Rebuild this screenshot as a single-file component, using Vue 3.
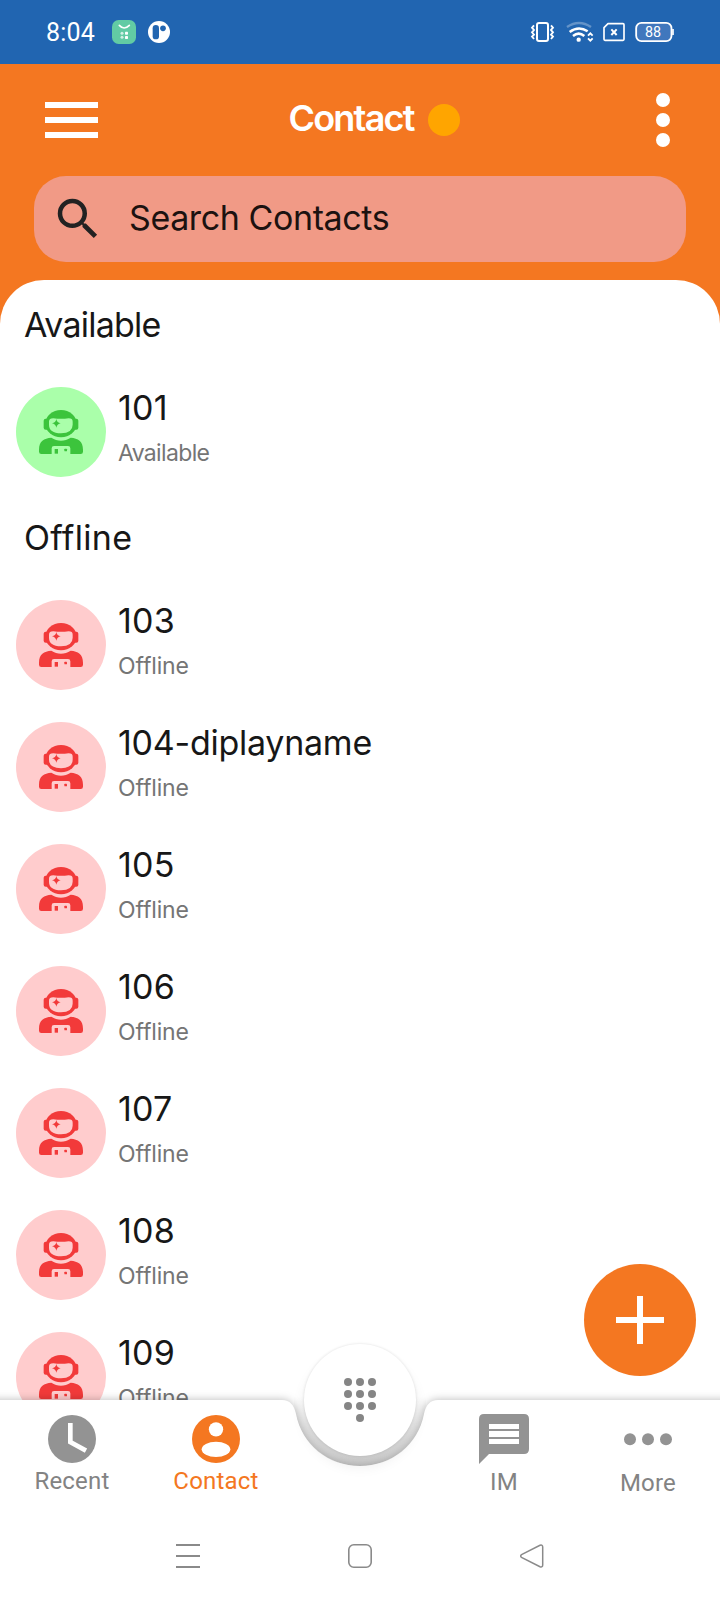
<script setup>
import { ref } from 'vue';

const search = ref('');
const activeTab = ref('contact');

const groups = ref([
    { title: 'Available', status: 'online', contacts: ['101'] },
    {
        title: 'Offline',
        status: 'offline',
        contacts: ['103', '104-diplayname', '105', '106', '107', '108', '109']
    }
]);

const statusLabel = { online: 'Available', offline: 'Offline' };

const selectTab = (name) => {
    activeTab.value = name;
}
</script>

<template>
    <div class="phone">
        <!-- Status bar -->
        <div class="status-bar">
            <span class="clock">8:04</span>
            <svg class="app-badge" width="24" height="24" viewBox="0 0 72 72">
                <rect width="72" height="72" rx="20" fill="#62cba4" />
                <path d="M22 16 Q36 32 52 16" fill="none" stroke="#fff" stroke-width="5" stroke-linecap="round" />
                <g fill="#fff">
                    <circle cx="30" cy="40" r="4.5" opacity=".7" />
                    <rect x="39" y="35" width="9" height="9" rx="2" />
                    <circle cx="30" cy="52" r="4.5" opacity=".7" />
                    <rect x="39" y="48" width="9" height="9" rx="2" />
                </g>
            </svg>
            <svg width="22" height="22" viewBox="0 0 66 66">
                <circle cx="33" cy="33" r="33" fill="#fff" />
                <rect x="14" y="12" width="19" height="43" rx="9.5" fill="#2165b1" />
                <circle cx="45" cy="22" r="8.5" fill="#2165b1" />
            </svg>
            <div class="status-right">
                <svg width="25" height="24" viewBox="150 60 75 72" fill="none" stroke="#fff" stroke-width="6">
                    <rect x="171" y="69" width="33" height="54" rx="6" />
                    <path d="M162 76 L156 83 L162 90 L156 97 L162 104 L156 110 L162 117" stroke-width="5.5" />
                    <path d="M213 76 L219 83 L213 90 L219 97 L213 104 L219 110 L213 117" stroke-width="5.5" />
                </svg>
                <svg class="wifi" width="28" height="24" viewBox="258 60 84 72" fill="none" stroke="#fff" stroke-width="7.5">
                    <path d="M261 81 Q297 57 333 81" opacity=".3" />
                    <path d="M269 96 Q296 76 323 94" />
                    <path d="M279 108 Q296 94 313 108" />
                    <circle cx="296" cy="119" r="6.5" fill="#fff" stroke="none" />
                    <path d="M324 107 L331 100 L338 107 M324 115 L331 122 L338 115" stroke-width="5.5" />
                </svg>
                <svg width="24" height="24" viewBox="366 60 72 72" fill="none" stroke="#fff" stroke-width="5">
                    <path d="M384 71 H429 Q432 71 432 74 V118 Q432 121 429 121 H375 Q372 121 372 118 V83 Z" stroke-linejoin="round" />
                    <path d="M394 88 L410 105 M410 88 L394 105" stroke-width="6" />
                </svg>
                <svg width="42" height="24" viewBox="462 60 126 72">
                    <rect x="468.5" y="68.5" width="106" height="55" rx="16" fill="#4077bd" stroke="#fff" stroke-width="5.5" />
                    <path d="M579 87 V105" stroke="#fff" stroke-width="5" />
                    <text class="battery-text" x="519" y="110.5" text-anchor="middle">88</text>
                </svg>
            </div>
        </div>

        <!-- Header -->
        <header class="header">
            <div class="title-row">
                <button class="menu-btn" aria-label="Menu">
                    <span></span><span></span><span></span>
                </button>
                <h1 class="title"><span class="title-text">Contact</span><i class="presence"></i></h1>
                <button class="more-btn" aria-label="Options">
                    <span></span><span></span><span></span>
                </button>
            </div>
            <label class="search">
                <svg width="54" height="54" viewBox="0 0 24 24" fill="#222">
                    <path d="M15.5 14h-.79l-.28-.27A6.471 6.471 0 0 0 16 9.5 6.5 6.5 0 1 0 9.5 16c1.61 0 3.09-.59 4.23-1.57l.27.28v.79l5 4.99L20.49 19l-4.99-5zm-6 0C7.01 14 5 11.99 5 9.5S7.01 5 9.5 5 14 7.01 14 9.5 11.99 14 9.5 14z" />
                </svg>
                <input v-model="search" class="search-input" type="text" placeholder="Search Contacts" />
            </label>
        </header>

        <!-- Contact list -->
        <main class="panel">
            <section v-for="group in groups" :key="group.title" :class="group.status">
                <h2 class="group-title">{{ group.title }}</h2>
                <ul class="contacts">
                    <li v-for="name in group.contacts" :key="name" class="contact">
                        <svg class="avatar" viewBox="0 0 270 270">
                            <circle class="tint" cx="135" cy="135" r="135" />
                            <g class="ink">
                                <rect x="83" y="95" width="104" height="33" rx="6" />
                                <ellipse cx="135" cy="110" rx="47" ry="41" />
                                <path d="M69 188 C69 162 84 154 106 152 C124 164 146 164 164 152 C186 154 201 162 201 188 V194 Q201 201 194 201 H163 V184 Q163 177 156 177 H114 Q107 177 107 184 V201 H76 Q69 201 69 194 Z" />
                                <rect x="116" y="186" width="10" height="14" />
                                <rect x="145" y="185" width="8" height="8" rx="2" />
                            </g>
                            <path class="tint" d="M112 94 Q135 97 158 94 Q170 94 170 104 V113 Q170 138 135 139 Q99 138 99 113 V104 Q99 94 112 94 Z" />
                            <path class="ink" d="M121 96 Q123 107 134 109 Q123 111 121 122 Q119 111 108 109 Q119 107 121 96 Z" />
                        </svg>
                        <div class="info">
                            <span class="name" :class="{ long: name.length > 3 }">{{ name }}</span>
                            <span class="state">{{ statusLabel[group.status] }}</span>
                        </div>
                    </li>
                </ul>
            </section>
        </main>

        <button class="add-btn" aria-label="Add contact"></button>

        <!-- Bottom tabs, with the notch for the dialpad button -->
        <nav class="tabs">
            <svg class="tabs-shape" width="720" height="182" viewBox="0 0 720 182">
                <defs>
                    <linearGradient id="notch" x1="0" y1="66" x2="0" y2="136" gradientUnits="userSpaceOnUse">
                        <stop offset="0" stop-color="#000" stop-opacity="0" />
                        <stop offset=".5" stop-color="#000" stop-opacity=".1" />
                        <stop offset="1" stop-color="#000" stop-opacity=".15" />
                    </linearGradient>
                </defs>
                <circle cx="360" cy="70" r="66" fill="url(#notch)" />
                <path class="tabs-bg" d="M-20 70 H282 C290 70 294 75 296 84 C302 115 328 136 360 136 C392 136 418 115 424 84 C426 75 430 70 438 70 H740 V182 H-20 Z" />
            </svg>
            <a class="tab" :class="{ active: activeTab === 'recent' }" @click="selectTab('recent')">
                <svg width="50" height="50" viewBox="0 0 150 150">
                    <circle cx="75" cy="75" r="72" fill="currentColor" />
                    <path d="M70 27 V84 L117 110" fill="none" stroke="#fff" stroke-width="14" />
                </svg>
                <span>Recent</span>
            </a>
            <a class="tab" :class="{ active: activeTab === 'contact' }" @click="selectTab('contact')">
                <svg width="50" height="50" viewBox="0 0 150 150">
                    <circle cx="75" cy="75" r="72" fill="currentColor" />
                    <circle cx="75" cy="46" r="21.5" fill="#fff" />
                    <ellipse cx="75" cy="106" rx="43" ry="23" fill="#fff" />
                </svg>
                <span>Contact</span>
            </a>
            <span class="tab"></span>
            <a class="tab im" :class="{ active: activeTab === 'im' }" @click="selectTab('im')">
                <svg width="50" height="50" viewBox="0 0 150 150">
                    <path d="M15 0 H135 Q150 0 150 15 V105 Q150 120 135 120 H30 L0 150 V15 Q0 0 15 0 Z" fill="currentColor" />
                    <path d="M30 30 H120 V45 H30 Z M30 51 H120 V69 H30 Z M30 75 H120 V90 H30 Z" fill="#fff" />
                </svg>
                <span>IM</span>
            </a>
            <a class="tab more" :class="{ active: activeTab === 'more' }" @click="selectTab('more')">
                <svg width="50" height="50" viewBox="0 0 150 150" fill="currentColor">
                    <circle cx="21" cy="76" r="18" />
                    <circle cx="75" cy="76" r="18" />
                    <circle cx="129" cy="76" r="18" />
                </svg>
                <span>More</span>
            </a>
            <button class="dial-btn" aria-label="Dialpad">
                <svg width="32" height="44" viewBox="0 0 32 44" fill="#858585">
                    <template v-for="row in 3" :key="row">
                        <circle v-for="col in 3" :key="col" :cx="col * 12 - 8" :cy="row * 12 - 8" r="4" />
                    </template>
                    <circle cx="16" cy="40" r="4" />
                </svg>
            </button>
        </nav>

        <!-- System navigation -->
        <div class="system-nav">
            <svg width="24" height="24" viewBox="0 0 24 24" stroke="#8a8a8a" stroke-width="1.8">
                <path d="M0 1 H24 M0 12 H24 M0 23 H24" />
            </svg>
            <svg width="24" height="24" viewBox="0 0 24 24" fill="none" stroke="#8a8a8a" stroke-width="1.6">
                <rect x=".8" y=".8" width="22.4" height="22.4" rx="5" />
            </svg>
            <svg width="24" height="24" viewBox="0 0 24 24" fill="none" stroke="#8a8a8a" stroke-width="1.5">
                <path d="M1.5 10.7 L20 1.3 Q22.7 .5 22.7 3 V21 Q22.7 23.5 20 22.7 L1.5 13.3 Q-.2 12 1.5 10.7 Z" />
            </svg>
        </div>
    </div>
</template>

<style>
body {
    margin: 0;
    background: #fff;
}
</style>

<style scoped>
.phone {
    position: relative;
    display: flex;
    flex-direction: column;
    width: 720px;
    height: 1600px;
    overflow: hidden;
    background: #f47721;
    font-family: Inter, Roboto, sans-serif;
    color: #171717;
}

button {
    padding: 0;
    border: none;
    background: none;
    cursor: pointer;
}

/* Status bar */
.status-bar {
    display: flex;
    align-items: center;
    height: 64px;
    flex-shrink: 0;
    box-sizing: border-box;
    padding: 0 44px 0 46px;
    background: #2165b1;
    color: #fff;
}

.clock {
    width: 66px;
    font-family: Roboto, sans-serif;
    font-size: 25px;
    letter-spacing: 0.2px;
}

.app-badge {
    margin-right: 12px;
}

.status-right {
    display: flex;
    gap: 8px;
    margin-left: auto;
}

.wifi {
    margin-left: 3px;
}

.battery-text {
    fill: #fff;
    font-family: Roboto, sans-serif;
    font-size: 43px;
}

/* Header */
.header {
    flex-shrink: 0;
    height: 216px;
}

.title-row {
    display: flex;
    align-items: center;
    justify-content: space-between;
    height: 112px;
    padding: 0 50px 0 45px;
}

.menu-btn {
    display: flex;
    flex-direction: column;
    gap: 9px;
    width: 53px;
}

.menu-btn span {
    height: 6px;
    background: #fff;
}

.title {
    display: flex;
    align-items: center;
    gap: 13px;
    margin: 0;
    padding-right: 6px;
    color: #fff;
    font-size: 36px;
    font-weight: 600;
}

.title-text {
    width: 126px;
    padding-bottom: 4px;
    letter-spacing: -1.8px;
    white-space: nowrap;
}

.presence {
    width: 32px;
    height: 32px;
    border-radius: 50%;
    background: #ffa500;
}

.more-btn {
    display: flex;
    flex-direction: column;
    gap: 6px;
}

.more-btn span {
    width: 14px;
    height: 14px;
    border-radius: 50%;
    background: #fff;
}

.search {
    display: flex;
    align-items: center;
    height: 86px;
    margin: 0 34px;
    padding-left: 17px;
    box-sizing: border-box;
    border-radius: 32px;
    background: #f19a86;
}

.search-input {
    flex: 1;
    margin-left: 24px;
    padding: 0 0 3px;
    border: none;
    outline: none;
    background: none;
    font: 34px Inter, sans-serif;
    letter-spacing: -0.4px;
}

.search-input::placeholder {
    color: #1c1210;
    opacity: 1;
}

/* List */
.panel {
    flex: 1;
    min-height: 0;
    overflow: hidden;
    border-radius: 44px 44px 0 0;
    background: #fff;
}

.group-title {
    height: 91px;
    margin: 0;
    padding-left: 24px;
    font-size: 34px;
    font-weight: 400;
    line-height: 89px;
    letter-spacing: -0.8px;
}

.offline .group-title {
    letter-spacing: 0.3px;
}

.contacts {
    margin: 0;
    padding: 0;
    list-style: none;
}

.contact {
    display: flex;
    gap: 12px;
    height: 122px;
    box-sizing: border-box;
    padding: 16px;
}

.avatar {
    width: 90px;
    height: 90px;
    flex-shrink: 0;
}

.online .tint {
    fill: #aaffaa;
}

.online .ink {
    fill: #3cc43c;
}

.offline .tint {
    fill: #ffcccd;
}

.offline .ink {
    fill: #f23a3a;
}

.info {
    display: flex;
    flex-direction: column;
}

.name {
    margin-bottom: 1px;
    font-size: 34px;
    line-height: 42px;
    letter-spacing: 0.2px;
}

.name.long {
    letter-spacing: -0.25px;
}

.state {
    color: #757575;
    font-size: 23px;
    line-height: 46px;
    letter-spacing: -0.15px;
}

.online .state {
    letter-spacing: -0.65px;
}

.add-btn {
    position: absolute;
    right: 24px;
    top: 1264px;
    width: 112px;
    height: 112px;
    border-radius: 50%;
    background:
        linear-gradient(#fff, #fff) center / 48px 6px no-repeat,
        linear-gradient(#fff, #fff) center / 6px 48px no-repeat,
        #f47721;
}

/* Tabs */
.tabs {
    position: relative;
    display: grid;
    grid-template-columns: repeat(5, 144px);
    height: 112px;
    flex-shrink: 0;
    background: #fff;
}

.tabs-shape {
    position: absolute;
    left: 0;
    bottom: 0;
}

.tabs-bg {
    fill: #fff;
    filter: drop-shadow(0 0 4px rgba(0, 0, 0, 0.28));
}

.tab {
    position: relative;
    display: flex;
    flex-direction: column;
    align-items: center;
    padding-top: 14px;
    color: #939393;
    font-family: Roboto, sans-serif;
    font-size: 24px;
    line-height: 34px;
    letter-spacing: 0.2px;
}

.tab span {
    color: #838383;
}

.tab.active,
.tab.active span {
    color: #f47721;
}

.im span {
    margin-top: 1px;
}

.more span {
    margin-top: 2px;
}

.dial-btn {
    position: absolute;
    left: 304px;
    top: -56px;
    display: flex;
    align-items: center;
    justify-content: center;
    width: 112px;
    height: 112px;
    border-radius: 50%;
    background: #fff;
    box-shadow: 0 0 3px rgba(0, 0, 0, 0.12), 0 10px 14px rgba(0, 0, 0, 0.08);
}

.system-nav {
    display: flex;
    align-items: center;
    justify-content: space-between;
    height: 88px;
    flex-shrink: 0;
    box-sizing: border-box;
    padding: 0 176px;
    background: #fff;
}
</style>
